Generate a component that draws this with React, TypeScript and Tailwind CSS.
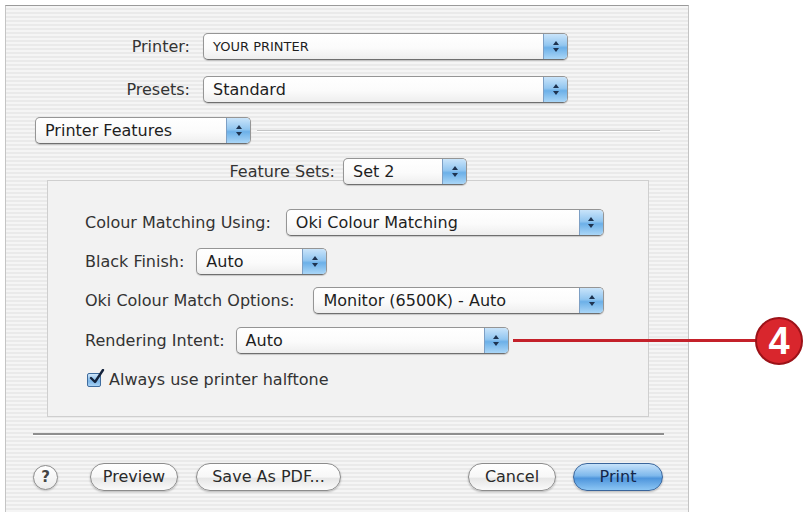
import React from "react";

const font = "font-['DejaVu_Sans',sans-serif]";

// up/down chevrons on the blue end cap of a popup menu
function Arrows() {
  return (
    <svg width="8" height="13" viewBox="0 0 8 13" aria-hidden="true">
      <path d="M4 1 L7 5 H1 Z" fill="#1e3350" />
      <path d="M4 12 L7 8 H1 Z" fill="#1e3350" />
    </svg>
  );
}

function Popup({
  value,
  width,
  small = false,
}: {
  value: string;
  width: string;
  small?: boolean;
}) {
  return (
    <div
      className={`flex h-[27px] ${width} shrink-0 overflow-hidden rounded-[5px] border border-[#959595] border-b-[#6f6f6f] bg-[linear-gradient(180deg,#ffffff_0%,#fbfbfb_55%,#eeeeee_100%)] shadow-[0_1px_1px_rgba(0,0,0,0.18)]`}
    >
      <div
        className={`flex flex-1 items-center pl-[9px] text-[#1e1e1e] ${
          small ? "text-[13px]" : "text-[16px]"
        }`}
      >
        {value}
      </div>
      <div className="flex w-[24px] items-center justify-center border-l border-[#7d9fc4] bg-[linear-gradient(180deg,#c9e4fa_0%,#92c6f0_45%,#6cb0e8_55%,#aad6f7_100%)]">
        <Arrows />
      </div>
    </div>
  );
}

function PillButton({
  label,
  width,
  primary = false,
}: {
  label: string;
  width: string;
  primary?: boolean;
}) {
  return (
    <button
      className={`flex h-[28px] ${width} items-center justify-center rounded-full border text-[16px] shadow-[0_1px_2px_rgba(0,0,0,0.25)] ${
        primary
          ? "border-[#3a659b] bg-[linear-gradient(180deg,#c6e2fa_0%,#7eb8ec_45%,#4e95dc_55%,#8cc6f4_100%)] text-[#14264a]"
          : "border-[#8c8c8c] bg-[linear-gradient(180deg,#ffffff_0%,#f7f7f7_50%,#e6e6e6_55%,#fafafa_100%)] text-[#2a2a2a]"
      }`}
    >
      {label}
    </button>
  );
}

export default function App() {
  return (
    <div
      className={`relative h-[512px] w-[810px] overflow-hidden bg-white ${font}`}
    >
      <div className="ml-[5px] mt-[5px] flex h-[512px] w-[684px] flex-col border-x border-t border-x-[#c4c4c4] border-t-[#9a9a9a] bg-[repeating-linear-gradient(180deg,#f5f5f5_0px,#f5f5f5_2px,#eaeaea_2px,#eaeaea_4px)]">
        {/* printer + presets */}
        <div className="mt-[27px] flex items-center">
          <span className="w-[184px] text-right text-[16px] text-[#333]">
            Printer:
          </span>
          <div className="ml-[13px]">
            <Popup value="YOUR PRINTER" width="w-[365px]" small />
          </div>
        </div>
        <div className="mt-[16px] flex items-center">
          <span className="w-[184px] text-right text-[16px] text-[#333]">
            Presets:
          </span>
          <div className="ml-[13px]">
            <Popup value="Standard" width="w-[365px]" />
          </div>
        </div>

        {/* pane selector */}
        <div className="mt-[14px] flex items-center pl-[29px]">
          <Popup value="Printer Features" width="w-[216px]" />
          <div className="ml-[6px] mr-[28px] flex-1 border-t border-b border-t-[#c2c2c2] border-b-white" />
        </div>

        <div className="relative z-10 mt-[14px] flex items-center">
          <span className="w-[329px] text-right text-[16px] text-[#333]">
            Feature Sets:
          </span>
          <div className="ml-[8px]">
            <Popup value="Set 2" width="w-[124px]" />
          </div>
        </div>

        {/* feature group */}
        <div className="ml-[41px] mt-[-5px] flex h-[237px] w-[602px] flex-col border border-[#cfcfcf] bg-[#f2f2f2] pl-[37px] pt-[28px] text-[16px] text-[#333]">
          <div className="flex items-center">
            <span>Colour Matching Using:</span>
            <div className="ml-[15px]">
              <Popup value="Oki Colour Matching" width="w-[318px]" />
            </div>
          </div>
          <div className="mt-[12px] flex items-center">
            <span>Black Finish:</span>
            <div className="ml-[12px]">
              <Popup value="Auto" width="w-[131px]" />
            </div>
          </div>
          <div className="mt-[12px] flex items-center">
            <span>Oki Colour Match Options:</span>
            <div className="ml-[19px]">
              <Popup value="Monitor (6500K) - Auto" width="w-[291px]" />
            </div>
          </div>
          <div className="mt-[13px] flex items-center">
            <span>Rendering Intent:</span>
            <div className="ml-[11px]">
              <Popup value="Auto" width="w-[273px]" />
            </div>
          </div>
          <label className="mt-[14px] flex items-center pl-[2px]">
            <span className="relative flex h-[14px] w-[14px] items-center justify-center rounded-[2px] border border-[#3f6c9e] bg-[linear-gradient(180deg,#cfe6fa_0%,#7cb6e8_60%,#a8d2f5_100%)]">
              <svg
                width="16"
                height="16"
                viewBox="0 0 16 16"
                className="absolute -top-[5px] left-[1px]"
                aria-hidden="true"
              >
                <path
                  d="M2 9 L6 13 L14 1"
                  fill="none"
                  stroke="#14233c"
                  strokeWidth="2.4"
                  strokeLinecap="round"
                  strokeLinejoin="round"
                />
              </svg>
            </span>
            <span className="ml-[8px]">Always use printer halftone</span>
          </label>
        </div>

        <div className="ml-[27px] mt-[16px] w-[631px] border-t-2 border-b border-t-[#8e8e8e] border-b-white" />

        {/* action buttons */}
        <div className="mt-[27px] flex items-center pl-[27px]">
          <span className="flex h-[25px] w-[25px] items-center justify-center rounded-full border border-[#8c8c8c] bg-[linear-gradient(180deg,#ffffff_0%,#ececec_100%)] text-[15px] font-bold text-[#444] shadow-[0_1px_2px_rgba(0,0,0,0.2)]">
            ?
          </span>
          <div className="ml-[32px]">
            <PillButton label="Preview" width="w-[88px]" />
          </div>
          <div className="ml-[18px]">
            <PillButton label="Save As PDF..." width="w-[145px]" />
          </div>
          <div className="ml-auto">
            <PillButton label="Cancel" width="w-[88px]" />
          </div>
          <div className="ml-[17px] mr-[25px]">
            <PillButton label="Print" width="w-[90px]" primary />
          </div>
        </div>
      </div>

      {/* callout marker */}
      <div className="absolute left-[513px] top-[339px] h-[3px] w-[248px] bg-[#c4212a]" />
      <div className="absolute left-[755px] top-[317px] flex h-[48px] w-[48px] items-center justify-center rounded-full border-2 border-[#9c1218] bg-[#d9262d] font-['Liberation_Sans',sans-serif] text-[38px] font-bold leading-none text-white">
        4
      </div>
    </div>
  );
}
